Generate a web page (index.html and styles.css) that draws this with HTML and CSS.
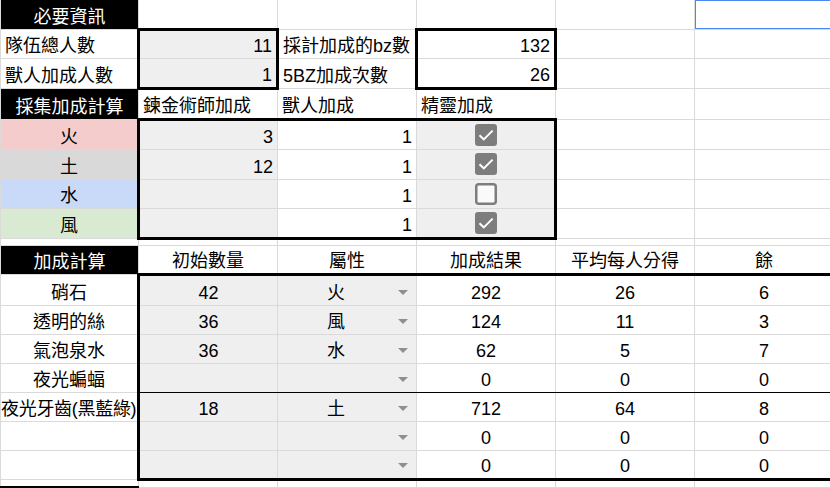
FILE: index.html
```html
<!DOCTYPE html>
<html lang="zh-Hant">
<head>
<meta charset="utf-8">
<title>Sheet</title>
<link rel="stylesheet" href="styles.css">
</head>
<body>
<table class="sheet">
  <colgroup>
    <col class="col-a"><col class="col-n"><col class="col-n"><col class="col-n"><col class="col-n"><col class="col-n">
  </colgroup>
  <tr class="h29 first">
    <td class="hd">必要資訊</td><td></td><td></td><td></td><td></td><td class="sel"></td>
  </tr>
  <tr class="h29">
    <td class="l">隊伍總人數</td><td class="r g bt bl br">11</td><td class="l">採計加成的bz數</td><td class="r bt bl br">132</td><td></td><td></td>
  </tr>
  <tr class="h30">
    <td class="l">獸人加成人數</td><td class="r g bb bl br">1</td><td class="l">5BZ加成次數</td><td class="r bb bl br">26</td><td></td><td></td>
  </tr>
  <tr class="h31">
    <td class="hd">採集加成計算</td><td class="l">鍊金術師加成</td><td class="l">獸人加成</td><td class="l">精靈加成</td><td></td><td></td>
  </tr>
  <tr class="h30">
    <td class="c fire">火</td><td class="r g bt bl">3</td><td class="r bt">1</td>
    <td class="cbx g bt br"><svg class="box" width="22" height="22" viewBox="0 0 22 22"><rect width="22" height="22" rx="3" fill="#7d7d7d"/><path d="M4.5 11.2 L8.8 15.4 L17.6 6.6" stroke="#fff" stroke-width="2" fill="none"/></svg></td>
    <td></td><td></td>
  </tr>
  <tr class="h30">
    <td class="c earth">土</td><td class="r g bl">12</td><td class="r">1</td>
    <td class="cbx g br"><svg class="box" width="22" height="22" viewBox="0 0 22 22"><rect width="22" height="22" rx="3" fill="#7d7d7d"/><path d="M4.5 11.2 L8.8 15.4 L17.6 6.6" stroke="#fff" stroke-width="2" fill="none"/></svg></td>
    <td></td><td></td>
  </tr>
  <tr class="h29">
    <td class="c water">水</td><td class="r g bl"></td><td class="r">1</td>
    <td class="cbx g br"><svg class="box" width="22" height="22" viewBox="0 0 22 22"><rect x="1.25" y="1.25" width="19.5" height="19.5" rx="2.5" fill="#fafafa" stroke="#7d7d7d" stroke-width="2.5"/></svg></td>
    <td></td><td></td>
  </tr>
  <tr class="h30">
    <td class="c wind">風</td><td class="r g bl bb"></td><td class="r bb">1</td>
    <td class="cbx g br bb"><svg class="box" width="22" height="22" viewBox="0 0 22 22"><rect width="22" height="22" rx="3" fill="#7d7d7d"/><path d="M4.5 11.2 L8.8 15.4 L17.6 6.6" stroke="#fff" stroke-width="2" fill="none"/></svg></td>
    <td></td><td></td>
  </tr>
  <tr class="h7">
    <td></td><td></td><td></td><td></td><td></td><td></td>
  </tr>
  <tr class="h29">
    <td class="hd">加成計算</td><td class="c">初始數量</td><td class="c">屬性</td><td class="c">加成結果</td><td class="c">平均每人分得</td><td class="c">餘</td>
  </tr>
  <tr class="h31">
    <td class="c">硝石</td><td class="c g bt bl">42</td>
    <td class="g bt dd"><div class="ddw"><span class="ddv">火</span><span class="arr"></span></div></td>
    <td class="c bt">292</td><td class="c bt">26</td><td class="c bt">6</td>
  </tr>
  <tr class="h29">
    <td class="c">透明的絲</td><td class="c g bl">36</td>
    <td class="g dd"><div class="ddw"><span class="ddv">風</span><span class="arr"></span></div></td>
    <td class="c">124</td><td class="c">11</td><td class="c">3</td>
  </tr>
  <tr class="h29">
    <td class="c">氣泡泉水</td><td class="c g bl">36</td>
    <td class="g dd"><div class="ddw"><span class="ddv">水</span><span class="arr"></span></div></td>
    <td class="c">62</td><td class="c">5</td><td class="c">7</td>
  </tr>
  <tr class="h29">
    <td class="c">夜光蝙蝠</td><td class="c g bl tb"></td>
    <td class="g dd tb"><div class="ddw"><span class="ddv"></span><span class="arr"></span></div></td>
    <td class="c tb">0</td><td class="c tb">0</td><td class="c tb">0</td>
  </tr>
  <tr class="h29">
    <td class="l clip">夜光牙齒(黑藍綠)</td><td class="c g bl">18</td>
    <td class="g dd"><div class="ddw"><span class="ddv">土</span><span class="arr"></span></div></td>
    <td class="c">712</td><td class="c">64</td><td class="c">8</td>
  </tr>
  <tr class="h29">
    <td></td><td class="c g bl"></td>
    <td class="g dd"><div class="ddw"><span class="ddv"></span><span class="arr"></span></div></td>
    <td class="c">0</td><td class="c">0</td><td class="c">0</td>
  </tr>
  <tr class="h29">
    <td></td><td class="c g bl bb"></td>
    <td class="g dd bb"><div class="ddw"><span class="ddv"></span><span class="arr"></span></div></td>
    <td class="c bb">0</td><td class="c bb">0</td><td class="c bb">0</td>
  </tr>
  <tr class="h8">
    <td></td><td></td><td></td><td></td><td></td><td></td>
  </tr>
  <tr class="h29">
    <td class="bt"></td><td></td><td></td><td></td><td></td><td></td>
  </tr>
</table>
</body>
</html>
```

FILE: styles.css
```css
html, body {
  margin: 0;
  padding: 0;
  background: #ffffff;
  overflow: hidden;
}

.sheet {
  border-collapse: collapse;
  table-layout: fixed;
  width: 833px;
  font-family: "Liberation Sans", "Noto Sans CJK TC", sans-serif;
  font-size: 18px;
  line-height: 22px;
  color: #000000;
}

.col-a { width: 138px; }
.col-n { width: 139px; }

.sheet td {
  border: 1px solid #dadada;
  padding: 0 4px 1px 4px;
  vertical-align: bottom;
  white-space: nowrap;
  overflow: hidden;
}

.first td { border-top: none; }

.h7 { height: 7px; }
.h8 { height: 8px; }
.h29 { height: 29px; }
.h30 { height: 30px; }
.h31 { height: 31px; }

.l { text-align: left; }
.r { text-align: right; }
.c { text-align: center; }

.sheet td.clip {
  padding-left: 0;
  padding-right: 0;
  letter-spacing: -0.3px;
  text-overflow: clip;
}

.hd {
  background: #000000;
  color: #ffffff;
  text-align: center;
}

.g { background: #efefef; }

.fire { background: #f4cccc; }
.earth { background: #d9d9d9; }
.water { background: #c9daf8; }
.wind { background: #d9ead3; }

.sheet td.bt { border-top: 3px solid #000; }
.sheet td.bb { border-bottom: 3px solid #000; }
.sheet td.bl { border-left: 3px solid #000; }
.sheet td.br { border-right: 3px solid #000; }
.sheet td.tb { border-bottom: 1px solid #000; }

.sheet td.cbx {
  text-align: center;
  vertical-align: middle;
  padding: 0;
}

.box {
  display: block;
  margin: 0 auto;
}

.sheet td.dd { padding: 0 0 1px 2px; }

.ddw {
  display: flex;
  align-items: center;
  height: 22px;
}

.ddv {
  flex: 1;
  text-align: center;
}

.arr {
  width: 0;
  height: 0;
  border-left: 5px solid transparent;
  border-right: 5px solid transparent;
  border-top: 5px solid #8f8f8f;
  margin: 0 8px 0 6px;
}

.sel {
  position: relative;
  overflow: visible;
}

.sel::after {
  content: "";
  position: absolute;
  left: -2px;
  top: -2px;
  right: -2px;
  bottom: -2px;
  border: 3px solid #4a89f3;
}

.sel::before {
  content: "";
  position: absolute;
  right: -6px;
  bottom: -6px;
  width: 8px;
  height: 8px;
  background: #4a89f3;
  z-index: 1;
}
```
